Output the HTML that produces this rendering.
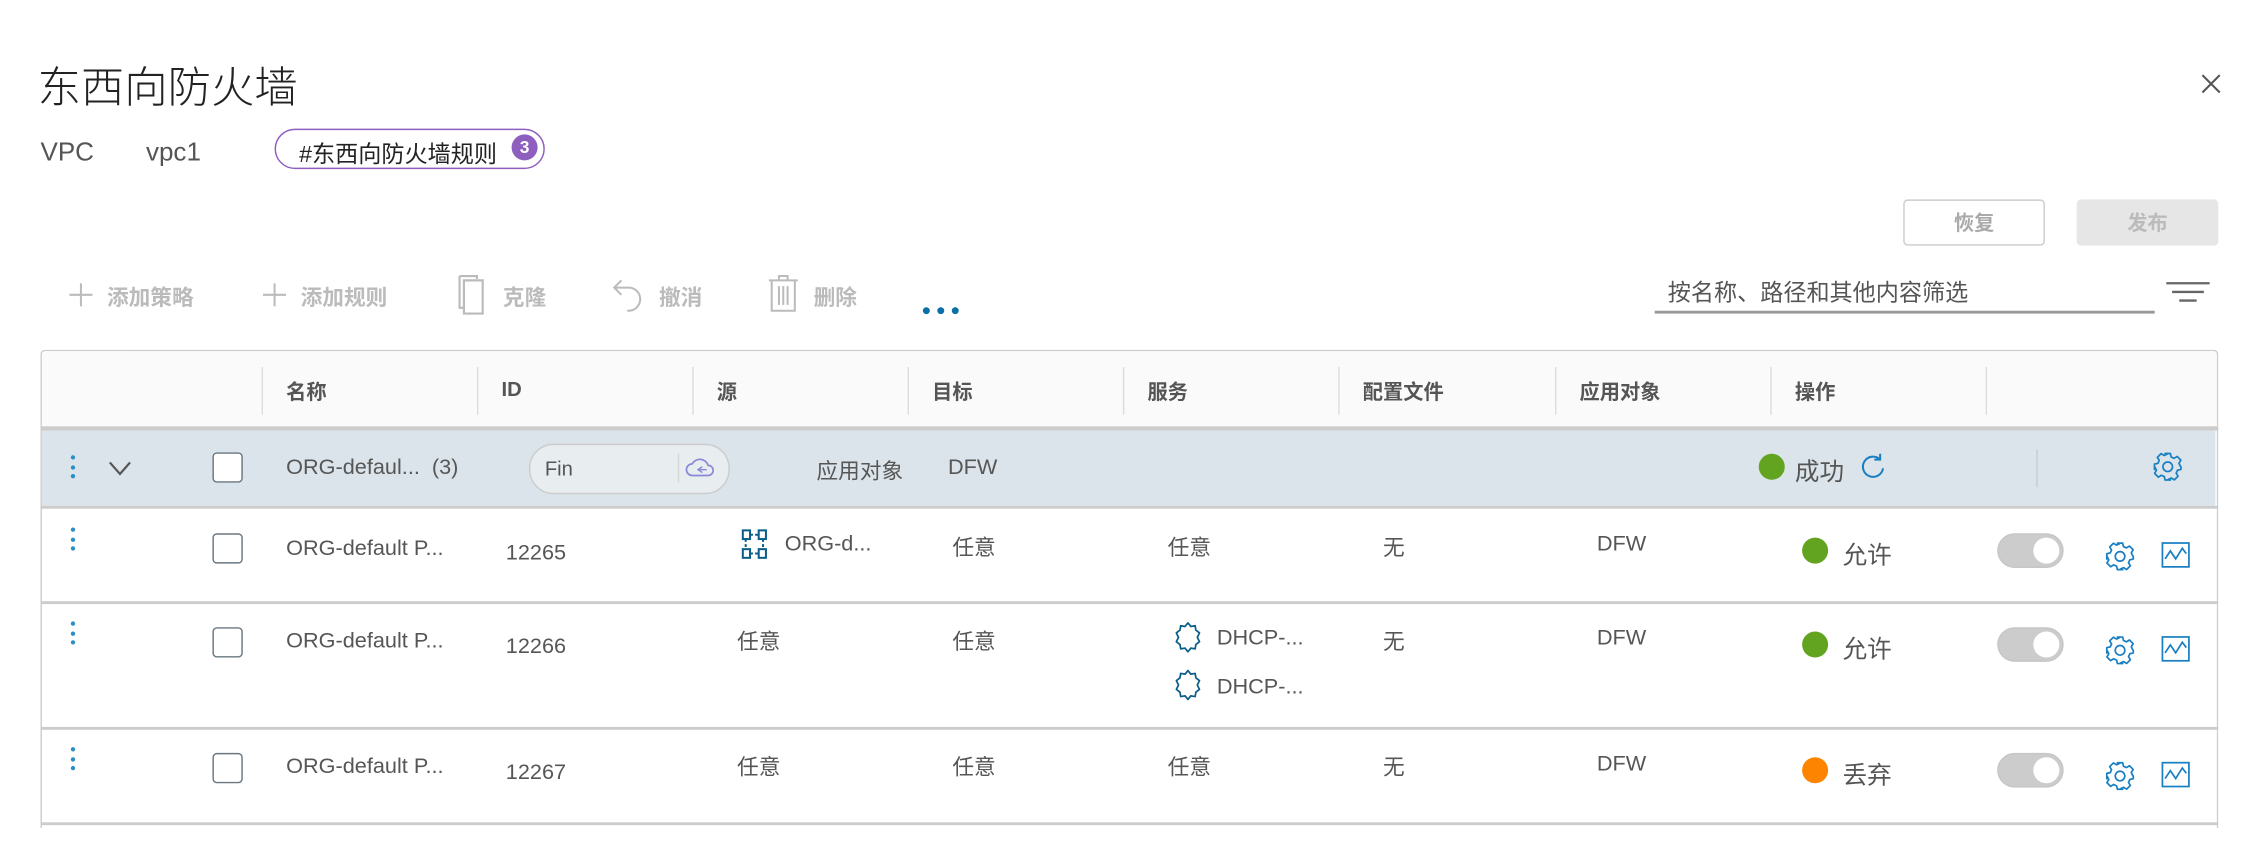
<!DOCTYPE html>
<html><head><meta charset="utf-8"><style>
html,body{margin:0;padding:0;background:#fff;overflow:hidden;width:2266px;height:842px}
#s{position:absolute;left:0;top:0;width:1568px;height:583px;transform:scale(1.44515);transform-origin:0 0;font-family:"Liberation Sans","Noto Sans CJK SC",sans-serif;color:#565656}
.a{position:absolute;white-space:nowrap}
.hd{font-size:14px;font-weight:bold;color:#555}
.t{font-size:15px;color:#565656;margin-top:2px}
.cb{position:absolute;width:19px;height:19px;border:1.5px solid #6a7780;border-radius:3px;background:#fff}
.dots{position:absolute;width:3px}
.dots i{display:block;width:3px;height:3px;border-radius:50%;background:#2a8fc7;margin-bottom:3.5px}
.vl{position:absolute;width:1px;background:#ddd}
.hl{position:absolute;left:28px;width:1507px;height:2px;background:#ccc}
.tg{position:absolute;width:44px;height:22px;border-radius:12px;background:#ccc;border:1px solid #c6c6c6}
.tg b{position:absolute;right:2px;top:2px;width:18px;height:18px;border-radius:50%;background:#fff}
.dot{position:absolute;width:18px;height:18px;border-radius:50%}
.tb{position:absolute;font-size:15px;color:#bbb;font-weight:bold}
</style></head><body><div id="s">
<div class="a" style="left:26px;top:36px;font-size:30px;color:#222;font-weight:300">东西向防火墙</div>
<svg class="a" style="left:1523px;top:51px" width="14" height="14"><path d="M1 1L13 13M13 1L1 13" stroke="#555" stroke-width="1.4"/></svg>
<div class="a" style="left:28px;top:95px;font-size:18px;color:#555">VPC</div>
<div class="a" style="left:101px;top:95px;font-size:18px;color:#555">vpc1</div>
<div class="a" style="left:190px;top:89px;width:185px;height:26px;border:1.5px solid #8e5fbf;border-radius:14px"></div>
<div class="a" style="left:207px;top:93px;font-size:16px;color:#222">#东西向防火墙规则</div>
<div class="a" style="left:354px;top:93px;width:18px;height:18px;border-radius:50%;background:#8e5fbf;color:#fff;font-size:12px;font-weight:bold;text-align:center;line-height:18px">3</div>
<div class="a" style="left:1317px;top:138px;width:96px;height:30px;border:1px solid #ccc;border-radius:3px;text-align:center;line-height:30px;font-size:14px;font-weight:bold;color:#aaa">恢复</div>
<div class="a" style="left:1437px;top:138px;width:98px;height:32px;background:#e6e6e6;border-radius:3px;text-align:center;line-height:32px;font-size:14px;font-weight:bold;color:#bbb">发布</div>
<svg class="a" style="left:48px;top:196px" width="16" height="16"><path d="M8 0v16M0 8h16" stroke="#bbb" stroke-width="1.4"/></svg>
<div class="tb" style="left:74px;top:195px">添加策略</div>
<svg class="a" style="left:182px;top:196px" width="16" height="16"><path d="M8 0v16M0 8h16" stroke="#bbb" stroke-width="1.4"/></svg>
<div class="tb" style="left:208px;top:195px">添加规则</div>
<svg class="a" style="left:317px;top:190px" width="24" height="28"><path d="M1 1h12v2M4 4h13v23H4z" fill="none" stroke="#bbb" stroke-width="1.5"/><path d="M1 1v22h3" fill="none" stroke="#bbb" stroke-width="1.5"/></svg>
<div class="tb" style="left:348px;top:195px">克隆</div>
<svg class="a" style="left:422px;top:191px" width="26" height="26"><path d="M8 3L3 8l5 5M3 8h10a8 8 0 0 1 0 16h-1" fill="none" stroke="#bbb" stroke-width="1.4"/></svg>
<div class="tb" style="left:456px;top:195px">撤消</div>
<svg class="a" style="left:531px;top:189px" width="24" height="28"><path d="M1 5h20M8 5V2h6v3M3 5v21h16V5M8 9v13M11 9v13M14 9v13" fill="none" stroke="#bbb" stroke-width="1.4"/></svg>
<div class="tb" style="left:563px;top:195px">删除</div>
<div class="a" style="left:638px;top:205px"><svg width="28" height="6"><circle cx="3" cy="3" r="2.4" fill="#0a6ea8"/><circle cx="13" cy="3" r="2.4" fill="#0a6ea8"/><circle cx="23" cy="3" r="2.4" fill="#0a6ea8"/></svg></div>
<div class="a" style="left:1154px;top:189px;font-size:16px;color:#555">按名称、路径和其他内容筛选</div>
<div class="a" style="left:1145px;top:215px;width:346px;height:1.5px;background:#999"></div>
<svg class="a" style="left:1498px;top:193px" width="32" height="18"><path d="M1 3h30M5 9h22M10 15h12" stroke="#666" stroke-width="1.6"/></svg>

<div class="a" style="left:28px;top:242px;width:1505px;height:330px;border:1px solid #ccc;border-bottom:none;border-radius:3px 3px 0 0"></div>
<div class="a" style="left:29px;top:243px;width:1505px;height:53px;background:#fafafa;border-radius:3px 3px 0 0"></div>
<div class="vl" style="left:181px;top:254px;height:33px"></div><div class="vl" style="left:330px;top:254px;height:33px"></div><div class="vl" style="left:479px;top:254px;height:33px"></div><div class="vl" style="left:628px;top:254px;height:33px"></div><div class="vl" style="left:777px;top:254px;height:33px"></div><div class="vl" style="left:926px;top:254px;height:33px"></div><div class="vl" style="left:1076px;top:254px;height:33px"></div><div class="vl" style="left:1225px;top:254px;height:33px"></div><div class="vl" style="left:1374px;top:254px;height:33px"></div>
<div class="a hd" style="left:198px;top:261px">名称</div><div class="a hd" style="left:347px;top:261px">ID</div><div class="a hd" style="left:496px;top:261px">源</div><div class="a hd" style="left:645px;top:261px">目标</div><div class="a hd" style="left:794px;top:261px">服务</div><div class="a hd" style="left:943px;top:261px">配置文件</div><div class="a hd" style="left:1093px;top:261px">应用对象</div><div class="a hd" style="left:1242px;top:261px">操作</div>
<div class="hl" style="top:295px;height:3px"></div>
<div class="a" style="left:29px;top:298px;width:1504px;height:52px;background:#dbe4ea"></div>
<div class="hl" style="top:350px"></div>
<div class="dots" style="left:49px;top:315px"><i></i><i></i><i></i></div>
<svg class="a" style="left:75px;top:318px" width="16" height="12"><path d="M1 2l7 8 7-8" fill="none" stroke="#555" stroke-width="1.5"/></svg>
<div class="cb" style="left:147px;top:313px"></div>
<div class="a t" style="left:198px;top:313px">ORG-defaul...&nbsp; (3)</div>
<div class="a" style="left:366px;top:307px;width:137px;height:33px;border:1px solid #ccc;border-radius:17px;background:#e8edf0"></div>
<div class="vl" style="left:469px;top:314px;height:20px;background:#d6d6d6"></div>
<div class="a" style="left:377px;top:316px;font-size:14px;color:#555">Fin</div>
<svg class="a" style="left:474px;top:314px" width="20" height="18"><path d="M5 15a4 4 0 0 1 0-8 6 6 0 0 1 11 1 3.5 3.5 0 0 1 0 7z" fill="none" stroke="#8a88d8" stroke-width="1.2"/><path d="M12 9l-3 2 3 2M9 11h6" fill="none" stroke="#8a88d8" stroke-width="1"/></svg>
<div class="a t" style="left:565px;top:313px">应用对象</div>
<div class="a t" style="left:656px;top:313px">DFW</div>
<div class="dot" style="left:1217px;top:314px;background:#62a420"></div>
<div class="a" style="left:1242px;top:312px;font-size:17px;color:#555">成功</div>
<svg class="a" style="left:1286px;top:313px" width="20" height="20"><path d="M15 5a7 7 0 1 0 2 6" fill="none" stroke="#1a7fc2" stroke-width="1.4"/><path d="M15 1v4h-4" fill="none" stroke="#1a7fc2" stroke-width="1.4"/></svg>
<div class="vl" style="left:1409px;top:311px;height:26px;background:#c6cdd2"></div>

<svg width="0" height="0" style="position:absolute"><defs><symbol id="g" viewBox="0 0 24 24"><path d="M10 2h4l.6 2.6 2.2 1 2.3-1.4 2.8 2.8-1.4 2.3 1 2.2L22 12v0l0 2-2.6.6-1 2.2 1.4 2.3-2.8 2.8-2.3-1.4-2.2 1L14 22h-4l-.6-2.6-2.2-1-2.3 1.4-2.8-2.8 1.4-2.3-1-2.2L2 14v-4l2.6-.6 1-2.2-1.4-2.3 2.8-2.8 2.3 1.4 2.2-1z" fill="none" stroke="#1a7fc2" stroke-width="1.3" stroke-linejoin="round"/><circle cx="12" cy="12" r="3.6" fill="none" stroke="#1a7fc2" stroke-width="1.3"/></symbol>
<symbol id="c" viewBox="0 0 24 24"><rect x="2" y="3" width="20" height="18" fill="none" stroke="#1a7fc2" stroke-width="1.3"/><path d="M4 15l4-6 4 6 5-8 3 4" fill="none" stroke="#1a7fc2" stroke-width="1.3"/></symbol>
<symbol id="sv" viewBox="0 0 24 24"><path d="M12 2l2 2.5 3-.5.5 3 2.5 2-1.5 3 1.5 3-2.5 2-.5 3-3-.5L12 22l-2-2.5-3 .5-.5-3L4 15l1.5-3L4 9l2.5-2 .5-3 3 .5z" fill="none" stroke="#0a5e8a" stroke-width="1.2" stroke-linejoin="round"/></symbol></defs></svg>
<svg class="a" style="left:1489px;top:312px" width="22" height="22"><use href="#g"/></svg>

<div class="hl" style="top:416px;height:1.5px"></div>
<div class="hl" style="top:503px;height:1.5px"></div>
<div class="hl" style="top:569px;height:1.5px"></div>

<div class="dots" style="left:49px;top:365px"><i></i><i></i><i></i></div>
<div class="cb" style="left:147px;top:369px"></div>
<div class="a t" style="left:198px;top:369px">ORG-default P...</div>
<div class="a t" style="left:350px;top:372px">12265</div>
<svg class="a" style="left:513px;top:366px" width="20" height="22"><g fill="none" stroke="#0a5e8a" stroke-width="1.4"><rect x="1" y="1" width="5" height="6"/><rect x="12" y="1" width="5" height="6"/><rect x="1" y="14" width="5" height="6"/><rect x="12" y="14" width="5" height="6"/><path d="M6 4h6M3 7v7M15 7v7M6 17h6" stroke-dasharray="2 1.5"/></g></svg>
<div class="a t" style="left:543px;top:366px">ORG-d...</div>
<div class="a t" style="left:659px;top:366px">任意</div>
<div class="a t" style="left:808px;top:366px">任意</div>
<div class="a t" style="left:957px;top:366px">无</div>
<div class="a t" style="left:1105px;top:366px">DFW</div>
<div class="dot" style="left:1247px;top:372px;background:#62a420"></div>
<div class="a" style="left:1275px;top:370px;font-size:17px;color:#555">允许</div>
<div class="tg" style="left:1382px;top:369px"><b></b></div>
<svg class="a" style="left:1456px;top:374px" width="22" height="22"><use href="#g"/></svg>
<svg class="a" style="left:1494px;top:373px" width="23" height="22"><use href="#c"/></svg>

<div class="dots" style="left:49px;top:430px"><i></i><i></i><i></i></div>
<div class="cb" style="left:147px;top:434px"></div>
<div class="a t" style="left:198px;top:433px">ORG-default P...</div>
<div class="a t" style="left:350px;top:437px">12266</div>
<div class="a t" style="left:510px;top:431px">任意</div>
<div class="a t" style="left:659px;top:431px">任意</div>
<svg class="a" style="left:810px;top:429px" width="24" height="24"><use href="#sv"/></svg>
<div class="a t" style="left:842px;top:431px">DHCP-...</div>
<svg class="a" style="left:810px;top:462px" width="24" height="24"><use href="#sv"/></svg>
<div class="a t" style="left:842px;top:465px">DHCP-...</div>
<div class="a t" style="left:957px;top:431px">无</div>
<div class="a t" style="left:1105px;top:431px">DFW</div>
<div class="dot" style="left:1247px;top:437px;background:#62a420"></div>
<div class="a" style="left:1275px;top:435px;font-size:17px;color:#555">允许</div>
<div class="tg" style="left:1382px;top:434px"><b></b></div>
<svg class="a" style="left:1456px;top:439px" width="22" height="22"><use href="#g"/></svg>
<svg class="a" style="left:1494px;top:438px" width="23" height="22"><use href="#c"/></svg>

<div class="dots" style="left:49px;top:517px"><i></i><i></i><i></i></div>
<div class="cb" style="left:147px;top:521px"></div>
<div class="a t" style="left:198px;top:520px">ORG-default P...</div>
<div class="a t" style="left:350px;top:524px">12267</div>
<div class="a t" style="left:510px;top:518px">任意</div>
<div class="a t" style="left:659px;top:518px">任意</div>
<div class="a t" style="left:808px;top:518px">任意</div>
<div class="a t" style="left:957px;top:518px">无</div>
<div class="a t" style="left:1105px;top:518px">DFW</div>
<div class="dot" style="left:1247px;top:524px;background:#fd8400"></div>
<div class="a" style="left:1275px;top:522px;font-size:17px;color:#555">丢弃</div>
<div class="tg" style="left:1382px;top:521px"><b></b></div>
<svg class="a" style="left:1456px;top:526px" width="22" height="22"><use href="#g"/></svg>
<svg class="a" style="left:1494px;top:525px" width="23" height="22"><use href="#c"/></svg>
</div></body></html>
